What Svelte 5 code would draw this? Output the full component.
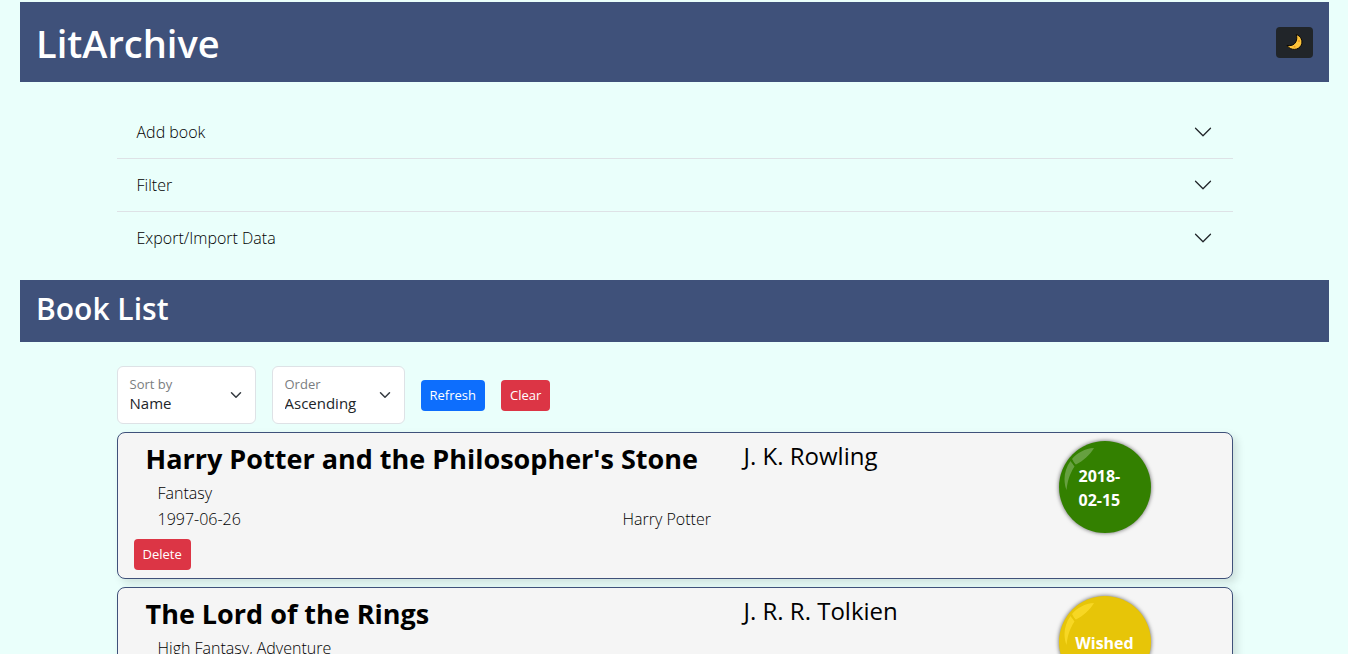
<script>
  const panels = ['Add book', 'Filter', 'Export/Import Data'];

  const sorters = [
    { id: 'sort-by', label: 'Sort by', options: ['Name'] },
    { id: 'sort-order', label: 'Order', options: ['Ascending'] },
  ];

  const books = [
    {
      title: "Harry Potter and the Philosopher's Stone",
      author: 'J. K. Rowling',
      genre: 'Fantasy',
      published: '1997-06-26',
      series: 'Harry Potter',
      status: '2018-02-15',
      kind: 'read',
    },
    {
      title: 'The Lord of the Rings',
      author: 'J. R. R. Tolkien',
      genre: 'High Fantasy, Adventure',
      status: 'Wished',
      kind: 'wished',
    },
  ];
</script>

<div class="page">
  <header class="bar top">
    <h1>LitArchive</h1>
    <button class="theme" type="button" aria-label="Toggle dark mode">
      <svg width="17" height="18" viewBox="0 0 17 18" aria-hidden="true">
        <path
          d="M10.200 1.500C15 3 17.200 8 15.200 12.200C12.700 17.300 4.600 18.200 1 12.400C5 13.200 8.300 12 9.800 9C11.100 6.300 11 4 10.200 1.500Z"
          fill="#fdc43b"
          stroke="#0b0805"
          stroke-width="1"
          stroke-linejoin="round"
        />
        <circle cx="13" cy="8" r="1" fill="#f09a1d" />
        <circle cx="8.500" cy="13.800" r="1" fill="#f09a1d" />
      </svg>
    </button>
  </header>

  <div class="container accordion">
    {#each panels as name}
      <button class="panel" type="button" aria-expanded="false">
        <span>{name}</span>
        <svg width="20" height="20" viewBox="0 0 16 16" aria-hidden="true">
          <path d="M2 5 L8 11 L14 5" fill="none" stroke="#212529" stroke-linecap="round" stroke-linejoin="round" />
        </svg>
      </button>
    {/each}
  </div>

  <div class="bar sub">
    <h2>Book List</h2>
  </div>

  <main class="container">
    <form class="tools">
      {#each sorters as s}
        <div class="field">
          <label for={s.id}>{s.label}</label>
          <select id={s.id}>
            {#each s.options as o}<option>{o}</option>{/each}
          </select>
          <svg width="16" height="12" viewBox="0 0 16 16" preserveAspectRatio="xMidYMid meet" aria-hidden="true">
            <path d="m2 5 6 6 6-6" fill="none" stroke="#343a40" stroke-width="2" stroke-linecap="round" stroke-linejoin="round" />
          </svg>
        </div>
      {/each}
      <button class="btn primary" type="button">Refresh</button>
      <button class="btn danger" type="button">Clear</button>
    </form>

    {#each books as b}
      <article class="card">
        <div class="summary">
          <div class="info">
            <div class="heading">
              <h3>{b.title}</h3>
              <p class="author">{b.author}</p>
            </div>
            <p class="line">{b.genre}</p>
            {#if b.published}
              <div class="facts">
                <p class="line">{b.published}</p>
                <p class="line">{b.series}</p>
              </div>
            {/if}
          </div>
          <div class="badge {b.kind}">
            <svg class="gloss" viewBox="0 0 92 92" aria-hidden="true">
              <g class="shine">
                <path d="M35 7C26 7.500 18 12 13 18L16.500 23.500C21 16 28 11 35 7Z" />
                <path d="M35 7C31 14 24 20 17 23.500L14.500 20.500C19 14 27 9.500 35 7Z" />
                <path d="M11.500 20C5 29 4 40 7.500 49C7 39 9 31 14 24Z" />
                <path d="M12.500 21.500L15.500 25.500C10 34 8.500 41 7.500 49C5.500 39 7 30 12.500 21.500Z" />
              </g>
            </svg>
            <span>{b.status}</span>
          </div>
        </div>
        <button class="btn danger" type="button">Delete</button>
      </article>
    {/each}
  </main>
</div>

<style>
  :global(body) {
    background: #eafffb;
    color: #000;
    font-family: 'Open Sans', 'Noto Sans', sans-serif;
    font-size: 16px;
    font-weight: 300;
    line-height: 24px;
    overflow: hidden;
  }
  :global(*) {
    box-sizing: border-box;
  }
  h1, h2, h3, p {
    margin: 0;
  }
  button, select {
    font: inherit;
    color: inherit;
  }
  .page {
    padding: 2px 19px 0 20px;
  }
  .bar {
    display: flex;
    justify-content: space-between;
    background: #3f517a;
    color: #fff;
    padding: 16px;
  }
  .top {
    align-items: center;
  }
  .sub {
    padding: 9px 16px 13px;
  }
  h1 {
    padding-top: 2px;
    font-size: 38px;
    font-weight: 600;
    line-height: 46px;
  }
  h2 {
    font-size: 30px;
    font-weight: 600;
    line-height: 40px;
  }
  .theme {
    display: flex;
    align-items: center;
    justify-content: center;
    width: 37px;
    height: 31px;
    padding: 0;
    border: 0;
    border-radius: 4px;
    background: #212529;
  }
  .container {
    max-width: 1140px;
    margin: 0 auto;
    padding: 24px 12px 0;
  }
  .accordion {
    padding-bottom: 16px;
  }
  .panel {
    display: flex;
    align-items: center;
    justify-content: space-between;
    width: 100%;
    padding: 14px 20px;
    border: 0;
    border-bottom: 1px solid #dee2e6;
    background: none;
    text-align: left;
  }
  .panel:last-child {
    border-bottom: 0;
  }
  .tools {
    display: flex;
    align-items: center;
    gap: 16px;
    margin-bottom: 8px;
    font-size: 15px;
    font-weight: 400;
  }
  .field {
    display: grid;
    align-items: center;
  }
  .field > * {
    grid-area: 1 / 1;
  }
  .field label {
    align-self: start;
    z-index: 1;
    padding: 6px 13px;
    font-size: 13px;
    color: #7a7d80;
    pointer-events: none;
  }
  .field svg {
    justify-self: end;
    margin-right: 12px;
    pointer-events: none;
  }
  .field select {
    appearance: none;
    min-width: 133px;
    height: 58px;
    padding: 26px 46px 10px 12px;
    border: 1px solid #dee2e6;
    border-radius: 6px;
    background: #fff;
    color: #212529;
    line-height: 20px;
  }
  #sort-by {
    min-width: 139px;
  }
  .btn {
    padding: 5px 9px;
    border: 0;
    border-radius: 4px;
    color: #fff;
    font-size: 13px;
    font-weight: 400;
    line-height: 21px;
  }
  .primary {
    background: #0d6efd;
  }
  .danger {
    background: #dc3545;
  }
  .card {
    margin-bottom: 8px;
    padding: 8px 16px;
    border: 1px solid #3f517a;
    border-radius: 8px;
    background: #f5f5f5;
    box-shadow: 4px 4px 8px rgba(0, 0, 0, 0.12);
  }
  .summary {
    display: grid;
    grid-template-columns: 925fr 157fr;
    min-height: 98px;
  }
  .heading {
    display: grid;
    grid-template-columns: 598fr 327fr;
    padding-bottom: 3px;
  }
  h3 {
    padding-left: 12px;
    font-size: 27px;
    font-weight: 700;
    line-height: 36px;
  }
  .author {
    padding-left: 12px;
    font-size: 24px;
    font-weight: 400;
    line-height: 30px;
  }
  .line {
    padding-left: 24px;
    line-height: 26px;
  }
  .facts {
    display: grid;
    grid-template-columns: 465fr 460fr;
  }
  .badge {
    position: relative;
    display: flex;
    align-items: center;
    justify-content: center;
    width: 92px;
    height: 92px;
    padding: 2px 20px 0;
    border-radius: 50%;
    box-shadow: 0 0 4px rgba(0, 0, 0, 0.6);
    color: #fff;
    font-weight: 700;
  }
  .read {
    background: #338000;
  }
  .wished {
    background: #e7c508;
  }
  .gloss {
    position: absolute;
    inset: 0;
  }
  .shine {
    fill: #fff;
    opacity: 0.25;
  }
  .wished .shine {
    fill: #ffe030;
    opacity: 0.7;
  }
</style>
